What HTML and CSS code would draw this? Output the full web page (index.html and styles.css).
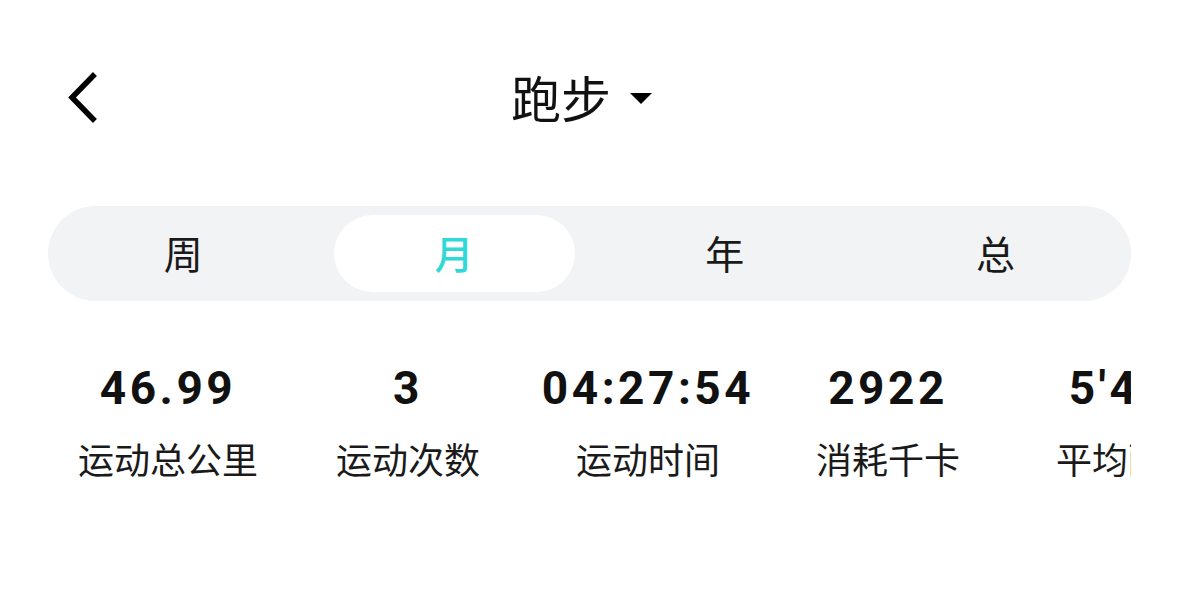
FILE: index.html
```html
<!DOCTYPE html>
<html lang="zh">
<head>
<meta charset="utf-8">
<link rel="stylesheet" href="styles.css">
</head>
<body>
<div class="page">
  <header class="header">
    <div class="back">
      <svg width="40" height="56" viewBox="0 0 40 56"><path d="M30 6 L9 27.5 L30 49" fill="none" stroke="#000" stroke-width="5.5" stroke-linecap="square"/></svg>
    </div>
    <div class="title">
      <span class="title-text">跑步</span>
      <svg class="caret" width="22" height="11" viewBox="0 0 22 11"><path d="M0 0 H22 L11 11 Z" fill="#000"/></svg>
    </div>
    <div></div>
  </header>

  <nav class="tabs">
    <div class="tab">周</div>
    <div class="tab active">月</div>
    <div class="tab">年</div>
    <div class="tab">总</div>
  </nav>

  <section class="stats">
    <div class="stat"><div class="num">46.99</div><div class="label">运动总公里</div></div>
    <div class="stat"><div class="num">3</div><div class="label">运动次数</div></div>
    <div class="stat"><div class="num">04:27:54</div><div class="label">运动时间</div></div>
    <div class="stat"><div class="num">2922</div><div class="label">消耗千卡</div></div>
    <div class="stat"><div class="num">5'40"</div><div class="label">平均配速</div></div>
  </section>
</div>
</body>
</html>
```

FILE: styles.css
```css
html, body {
  margin: 0;
  padding: 0;
  background: #fff;
}

body {
  font-family: "Noto Sans CJK SC", "Noto Sans", sans-serif;
  color: #111;
  width: 1179px;
  height: 604px;
  overflow: hidden;
}

.header {
  height: 196px;
  display: grid;
  grid-template-columns: 1fr auto 1fr;
  align-items: center;
}

.back {
  padding-left: 63px;
  display: flex;
  align-items: center;
}

.back svg {
  display: block;
}

.title {
  display: flex;
  align-items: center;
  gap: 19px;
  padding-right: 16px;
  padding-bottom: 4px;
}

.title-text {
  font-size: 50px;
  line-height: 1.2;
  color: #111;
}

.caret {
  display: block;
  margin-top: 4px;
}

.tabs {
  margin: 10px 48px 0;
  height: 95px;
  box-sizing: border-box;
  padding: 9px 0;
  background: #f2f3f5;
  border-radius: 48px;
  display: grid;
  grid-template-columns: repeat(4, 1fr);
}

.tab {
  display: flex;
  align-items: center;
  justify-content: center;
  font-size: 39px;
  color: #1a1a1a;
  margin: 0 15px;
  padding-bottom: 4px;
  border-radius: 39px;
}

.tab.active {
  background: #fff;
  color: #2fd9d6;
  font-weight: 500;
}

.stats {
  margin: 0 48px;
  padding-top: 60px;
  display: flex;
  overflow: hidden;
}

.stat {
  flex: 0 0 240px;
  text-align: center;
}

.num {
  font-family: Roboto, "Liberation Sans", sans-serif;
  font-weight: 700;
  font-size: 46px;
  letter-spacing: 3.5px;
  line-height: 54px;
  color: #111;
}

.label {
  margin-top: 17px;
  font-size: 36px;
  line-height: 52px;
  color: #1a1a1a;
  white-space: nowrap;
}
```
